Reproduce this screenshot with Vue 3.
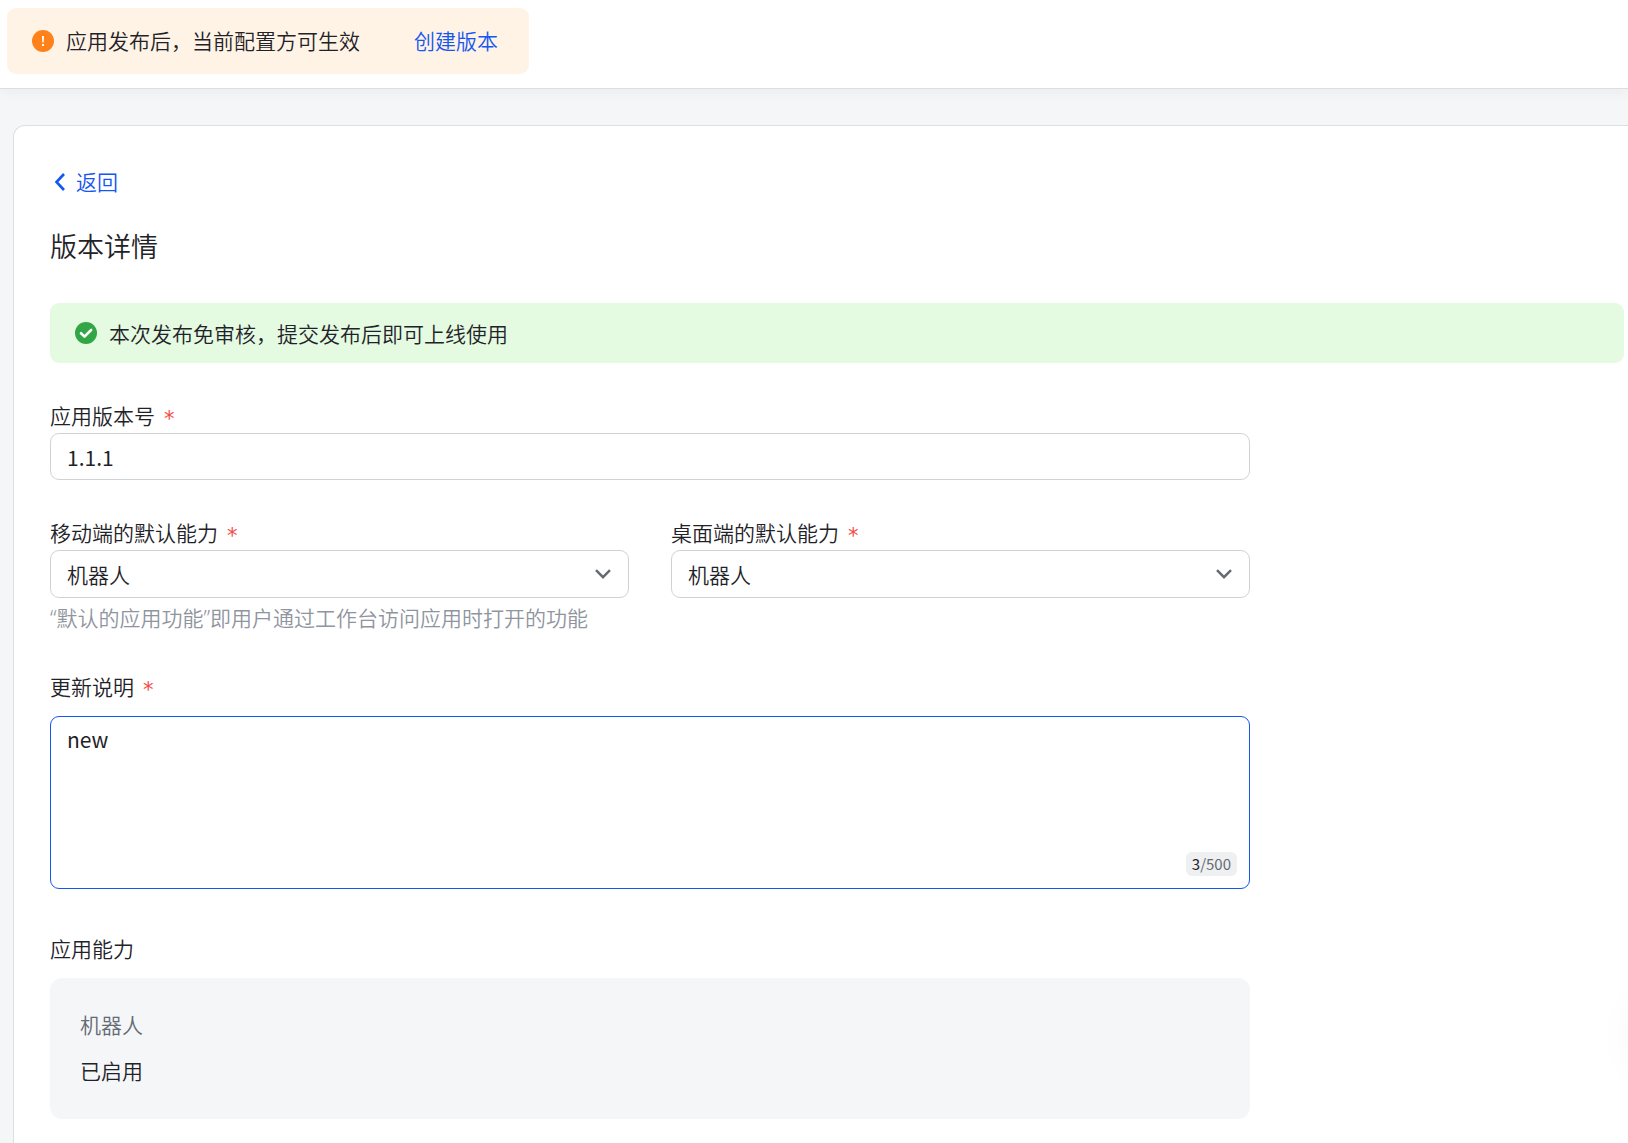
<template>
  <div class="page">
    <header class="header">
      <div class="notice">
        <svg class="icon" viewBox="0 0 22 22" aria-hidden="true">
          <circle cx="11" cy="11" r="11" fill="#ff811a" />
          <path d="M10 6h2l-.3 6.4h-1.4z" fill="#fff" />
          <rect x="10" y="14" width="2" height="2" fill="#fff" />
        </svg>
        <span class="tip-text">应用发布后，当前配置方可生效</span>
        <a class="link tip-text notice-link" href="#" @click.prevent>创建版本</a>
      </div>
    </header>

    <main class="card">
      <a class="link back" href="#" @click.prevent>
        <svg class="back-icon" viewBox="0 0 20 22" aria-hidden="true">
          <path d="M14 3l-7.500 8 7.500 8" fill="none" stroke="#1456f0" stroke-width="2.600" />
        </svg>
        <span>返回</span>
      </a>
      <h1 class="title">版本详情</h1>

      <div class="alert">
        <svg class="icon" viewBox="0 0 22 22" aria-hidden="true">
          <circle cx="11" cy="11" r="11" fill="#32a645" />
          <path d="M6 11.200l3.500 3.400 6.600-6.600" fill="none" stroke="#fff" stroke-width="2.600" stroke-linecap="round" stroke-linejoin="round" />
        </svg>
        <span>本次发布免审核，提交发布后即可上线使用</span>
      </div>

      <form class="form" @submit.prevent>
        <div class="field">
          <label class="label" for="version">应用版本号<span class="required">*</span></label>
          <input id="version" v-model="form.version" class="control" type="text" />
        </div>

        <div class="field">
          <div class="row">
            <div v-for="item in abilities" :key="item.key">
              <label class="label" :for="item.key">{{ item.label }}<span class="required">*</span></label>
              <div class="select-wrap">
                <select :id="item.key" v-model="form[item.key]" class="control select">
                  <option value="bot">机器人</option>
                </select>
                <svg class="arrow" viewBox="0 0 16 10" aria-hidden="true">
                  <path d="M1 1.200l7 7 7-7" fill="none" stroke="#646a73" stroke-width="2.400" />
                </svg>
              </div>
            </div>
          </div>
          <p class="hint">“默认的应用功能”即用户通过工作台访问应用时打开的功能</p>
        </div>

        <div class="field">
          <label class="label spaced" for="remark">更新说明<span class="required">*</span></label>
          <div class="textarea-wrap">
            <textarea id="remark" v-model="form.remark" class="control textarea" :maxlength="maxLength"></textarea>
            <span class="counter"><b>{{ form.remark.length }}</b>/{{ maxLength }}</span>
          </div>
        </div>

        <section class="ability">
          <h2 class="label spaced">应用能力</h2>
          <div class="ability-box">
            <div class="ability-name">机器人</div>
            <div>已启用</div>
          </div>
        </section>
      </form>
    </main>

    <!-- 右侧收起的悬浮面板，只露出阴影 -->
    <div class="float-panel"></div>
  </div>
</template>

<script setup>
import { reactive } from 'vue';

const maxLength = 500; // 更新说明最大长度

const abilities = [
  { key: 'mobile', label: '移动端的默认能力' },
  { key: 'desktop', label: '桌面端的默认能力' },
];

const form = reactive({
  version: '1.1.1',
  mobile: 'bot',
  desktop: 'bot',
  remark: 'new',
});
</script>

<style>
body {
  margin: 0;
  background: #f5f6f8;
}
</style>

<style scoped>
.page {
  display: flex;
  flex-direction: column;
  min-height: 100vh;
  overflow: hidden;
  font-family: 'Noto Sans CJK SC', sans-serif;
  font-size: 21px;
  font-weight: 350;
  line-height: 33px;
  color: #1f2329;
}

.header {
  display: flex;
  padding: 8px 7px 14px;
  background: #fff;
  border-bottom: 1px solid #dcdee0;
  box-shadow: 0 3px 12px rgba(31, 35, 41, 0.05);
}

.notice {
  display: flex;
  align-items: center;
  box-sizing: border-box;
  height: 66px;
  padding: 0 31px 0 25px;
  border-radius: 9px;
  background: #fff3e5;
}

.tip-text {
  padding-bottom: 2px;
}

.icon {
  flex: none;
  width: 22px;
  height: 22px;
  margin-right: 12px;
}

.link {
  color: #1456f0;
  text-decoration: none;
}

.notice-link {
  margin-left: 54px;
}

.card {
  flex: 1;
  margin: 36px 0 0 13px;
  padding: 39px 4px 24px 36px;
  border: solid #dcdee0;
  border-width: 1px 0 0 1px;
  border-radius: 12px 0 0 0;
  background: #fff;
}

.back {
  display: flex;
  align-items: center;
  width: fit-content;
}

.back-icon {
  width: 20px;
  height: 22px;
  margin-right: 6px;
}

.title {
  margin: 28px 0 37px;
  font-size: 27px;
  font-weight: inherit;
  line-height: 40px;
}

.alert {
  display: flex;
  align-items: center;
  height: 60px;
  margin-bottom: 37px;
  padding: 0 25px;
  border-radius: 9px;
  background: #e4fae1;
}

.form {
  max-width: 1200px;
}

.field {
  margin-bottom: 37px;
}

.label {
  display: flex;
  align-items: center;
  margin: 0;
  padding-bottom: 2px;
  font-size: 21px;
  font-weight: inherit;
  line-height: 31px;
}

.spaced {
  margin-bottom: 12px;
}

.required {
  height: 23px;
  margin-left: 9px;
  font-family: 'DejaVu Sans', sans-serif;
  font-weight: 400;
  color: #f54a45;
}

.control {
  display: block;
  box-sizing: border-box;
  width: 100%;
  height: 47px;
  padding: 0 16px;
  border: 1px solid #d0d3d6;
  border-radius: 9px;
  outline: none;
  background: #fff;
  font: inherit;
  font-weight: 400;
  color: inherit;
}

.row {
  display: grid;
  grid-template-columns: 1fr 1fr;
  gap: 42px;
}

.select-wrap,
.textarea-wrap {
  position: relative;
}

.select {
  height: 48px;
  font-weight: 350;
  appearance: none;
}

.arrow {
  position: absolute;
  top: 19px;
  right: 18px;
  width: 16px;
  height: 10px;
  pointer-events: none;
}

.hint {
  margin: 5px 0 0;
  font-family: 'Noto Sans', 'Noto Sans CJK SC', sans-serif;
  line-height: 31px;
  color: #8f959e;
}

.textarea {
  height: 173px;
  padding: 6px 16px;
  border-color: #1456f0;
  resize: none;
}

.counter {
  position: absolute;
  right: 13px;
  bottom: 13px;
  padding: 0 6px;
  border-radius: 6px;
  background: #eff0f1;
  font-size: 15px;
  font-weight: 400;
  line-height: 24px;
  color: #646a73;
}

.counter b {
  font-weight: inherit;
  color: #1f2329;
}

.ability {
  margin-top: 44px;
}

.ability-box {
  display: grid;
  gap: 13px;
  padding: 30px 30px 32px;
  border-radius: 12px;
  background: #f5f6f8;
}

.ability-name {
  color: #646a73;
}

.float-panel {
  position: fixed;
  top: 1000px;
  right: -80px;
  width: 72px;
  height: 72px;
  border-radius: 36px;
  box-shadow: 0 0 48px rgba(31, 35, 41, 0.06);
}
</style>
